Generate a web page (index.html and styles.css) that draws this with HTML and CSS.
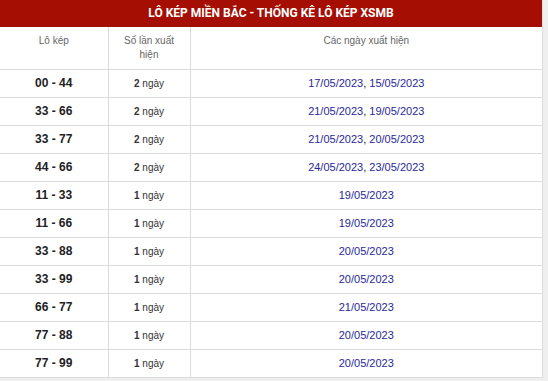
FILE: index.html
```html
<!DOCTYPE html>
<html lang="vi">
<head>
  <meta charset="UTF-8" />
  <title>Lô kép miền Bắc</title>
  <link rel="stylesheet" href="styles.css">
</head>
<body>
  <div class="box">
    <h2 class="title">LÔ KÉP MIỀN BẮC - THỐNG KÊ LÔ KÉP XSMB</h2>
    <table class="stats">
      <colgroup>
        <col class="c1">
        <col class="c2">
        <col class="c3">
      </colgroup>
      <thead>
        <tr>
          <th>Lô kép</th>
          <th>Số lần xuất hiện</th>
          <th>Các ngày xuất hiện</th>
        </tr>
      </thead>
      <tbody>
        <tr><td class="pair">00 - 44</td><td class="count"><b>2</b> ngày</td><td class="dates"><span>17/05/2023</span>, <span>15/05/2023</span></td></tr>
        <tr><td class="pair">33 - 66</td><td class="count"><b>2</b> ngày</td><td class="dates"><span>21/05/2023</span>, <span>19/05/2023</span></td></tr>
        <tr><td class="pair">33 - 77</td><td class="count"><b>2</b> ngày</td><td class="dates"><span>21/05/2023</span>, <span>20/05/2023</span></td></tr>
        <tr><td class="pair">44 - 66</td><td class="count"><b>2</b> ngày</td><td class="dates"><span>24/05/2023</span>, <span>23/05/2023</span></td></tr>
        <tr><td class="pair">11 - 33</td><td class="count"><b>1</b> ngày</td><td class="dates"><span>19/05/2023</span></td></tr>
        <tr><td class="pair">11 - 66</td><td class="count"><b>1</b> ngày</td><td class="dates"><span>19/05/2023</span></td></tr>
        <tr><td class="pair">33 - 88</td><td class="count"><b>1</b> ngày</td><td class="dates"><span>20/05/2023</span></td></tr>
        <tr><td class="pair">33 - 99</td><td class="count"><b>1</b> ngày</td><td class="dates"><span>20/05/2023</span></td></tr>
        <tr><td class="pair">66 - 77</td><td class="count"><b>1</b> ngày</td><td class="dates"><span>21/05/2023</span></td></tr>
        <tr><td class="pair">77 - 88</td><td class="count"><b>1</b> ngày</td><td class="dates"><span>20/05/2023</span></td></tr>
        <tr><td class="pair">77 - 99</td><td class="count"><b>1</b> ngày</td><td class="dates"><span>20/05/2023</span></td></tr>
      </tbody>
    </table>
  </div>
</body>
</html>
```

FILE: styles.css
```css
* {
  margin: 0;
  padding: 0;
  box-sizing: border-box;
}

body {
  background: #efefef;
  font-family: "Liberation Sans", Arial, sans-serif;
  color: #222;
}

.box {
  width: 543px;
  background: #fff;
  border-right: 1px solid #dcdcdc;
  border-bottom: 1px solid #dcdcdc;
}

.title {
  height: 27px;
  line-height: 27px;
  background: #a50e02;
  color: #fff;
  text-align: center;
  font-family: Roboto, "Liberation Sans", sans-serif;
  font-size: 12px;
  font-weight: 700;
}

.stats {
  width: 100%;
  border-collapse: collapse;
  table-layout: fixed;
}

.c1 { width: 108px; }
.c2 { width: 82px; }

.stats th,
.stats td {
  border-bottom: 1px solid #dcdcdc;
  border-right: 1px solid #dcdcdc;
  text-align: center;
}

.stats th:last-child,
.stats td:last-child {
  border-right: 0;
}

.stats tbody tr:last-child td {
  border-bottom: 0;
}

.stats th {
  height: 42px;
  padding: 7px 8px 6px;
  vertical-align: top;
  font-size: 10px;
  font-weight: 400;
  line-height: 14px;
  color: #666;
}

.stats td {
  height: 28px;
  vertical-align: middle;
}

.pair {
  font-size: 12px;
  font-weight: 700;
  color: #222;
}

.count {
  font-size: 10px;
  color: #333;
}

.dates {
  font-size: 11px;
  color: #222;
}

.dates span {
  color: #28289a;
}
```
